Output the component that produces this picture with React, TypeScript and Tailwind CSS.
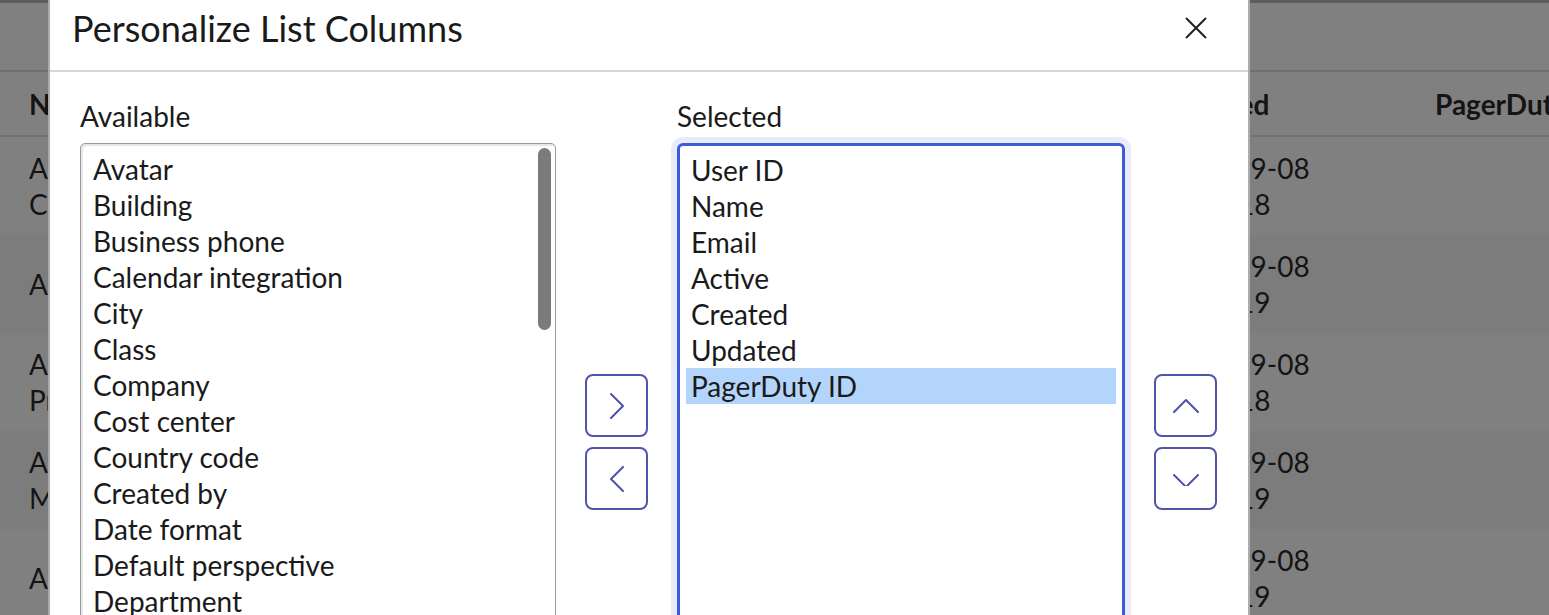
const available = [
  "Avatar",
  "Building",
  "Business phone",
  "Calendar integration",
  "City",
  "Class",
  "Company",
  "Cost center",
  "Country code",
  "Created by",
  "Date format",
  "Default perspective",
  "Department",
  "Domain",
  "Employee number",
  "Failed login attempts",
];

const selected = ["User ID", "Name", "Email", "Active", "Created", "Updated", "PagerDuty ID"];

const rows = [
  { name: ["Adam", "Cooper"], date: ["2022-09-08", "11:04:18"] },
  { name: ["Aaron"], date: ["2022-09-08", "11:04:19"] },
  { name: ["Alex", "Price"], date: ["2022-09-08", "11:04:18"] },
  { name: ["Amy", "Morris"], date: ["2022-09-08", "11:04:19"] },
  { name: ["Andrew"], date: ["2022-09-08", "11:04:19"] },
];

function Chevron({ dir }: { dir: "right" | "left" | "up" | "down" }) {
  const paths = {
    right: "M9 4 L21 16 L9 28",
    left: "M21 4 L9 16 L21 28",
    up: "M4 21 L16 9 L28 21",
    down: "M4 11 L16 23 L28 11",
  };
  const vertical = dir === "right" || dir === "left";
  return (
    <svg
      width={vertical ? 14 : 26}
      height={vertical ? 26 : 14}
      viewBox={vertical ? "8 3 14 26" : "3 8 26 14"}
      fill="none"
      stroke="#4f52ab"
      strokeWidth="2"
      strokeLinecap="round"
      strokeLinejoin="round"
    >
      <path d={paths[dir]} />
    </svg>
  );
}

function ArrowButton({ dir }: { dir: "right" | "left" | "up" | "down" }) {
  return (
    <button className="w-[63px] h-[63px] flex items-center justify-center border-2 border-[#5254ac] rounded-[8px] bg-white">
      <Chevron dir={dir} />
    </button>
  );
}

export default function App() {
  return (
    <div
      className="relative w-[1549px] h-[615px] overflow-hidden bg-[#808080] text-[#141414]"
      style={{ fontFamily: "Lato, 'Open Sans', sans-serif" }}
    >
      {/* page behind the overlay */}
      <div className="h-[3px] bg-[#5d5d5d]" />
      <div className="h-[69px] border-b-2 border-[#6f6f6f]" />
      <div className="h-[65px] border-b-2 border-[#727272] flex items-center text-[28px] font-bold whitespace-nowrap">
        <div className="pl-[29px] w-[1162px] shrink-0">Name</div>
        <div className="w-[273px] shrink-0">Updated</div>
        <div className="shrink-0">PagerDuty ID</div>
      </div>
      {rows.map((r, i) => (
        <div
          key={i}
          className={`h-[98px] flex items-center text-[28px] leading-[36px] ${i % 2 ? "bg-[#7c7c7c]" : "bg-[#808080]"}`}
        >
          <div className="pl-[29px] w-[1159px] shrink-0">
            {r.name.map((n) => (
              <div key={n}>{n}</div>
            ))}
          </div>
          <div>
            {r.date.map((d) => (
              <div key={d}>{d}</div>
            ))}
          </div>
        </div>
      ))}

      {/* modal */}
      <div className="absolute left-[48px] top-0 w-[1202px] h-[640px] bg-white border-x-2 border-[#acacac]">
        <div className="h-[72px] border-b-2 border-[#d6d6d6] flex items-center justify-between pl-[22px] pr-[40px]">
          <h2 className="text-[36px] leading-[40px] text-[#1a1a1a] -mt-[14px] whitespace-nowrap">Personalize List Columns</h2>
          <svg width="24" height="24" viewBox="0 0 24 24" className="-mt-[14px]" stroke="#222" strokeWidth="2">
            <path d="M2 2 L22 22 M22 2 L2 22" />
          </svg>
        </div>

        <div className="pl-[30px] pt-[30px] grid grid-cols-[476px_63px_448px_63px] gap-x-[29px] text-[28px] text-[#1a1a1a]">
          <div className="leading-[28px] mb-[13px]">Available</div>
          <div />
          <div className="leading-[28px] mb-[13px]">Selected</div>
          <div />

          <div className="h-[598px] flex border-[1.5px] border-[#9a9a9a] rounded-[5px] shadow-[inset_2px_2px_0_#e6e6e6] overflow-hidden">
            <ul className="flex-1 pt-[7px] px-[6px]">
              {available.map((a) => (
                <li key={a} className="h-[36px] leading-[36px] pl-[6px] whitespace-nowrap">
                  {a}
                </li>
              ))}
            </ul>
            <div className="w-[18px] pt-[4px] pr-[4px] pl-[1px]">
              <div className="h-[182px] w-[13px] rounded-full bg-[#7b7b7b]" />
            </div>
          </div>

          <div className="h-[598px] flex flex-col justify-center gap-[10px]">
            <ArrowButton dir="right" />
            <ArrowButton dir="left" />
          </div>

          <div className="h-[598px] border-[3px] border-[#3d5ad8] rounded-[6px] shadow-[0_0_0_6px_#e8ebfb] pt-[6px] px-[6px]">
            <ul>
              {selected.map((s) => (
                <li
                  key={s}
                  className={`h-[36px] leading-[36px] pl-[5px] ${s === "PagerDuty ID" ? "bg-[#b4d5fb]" : ""}`}
                >
                  {s}
                </li>
              ))}
            </ul>
          </div>

          <div className="h-[598px] flex flex-col justify-center gap-[10px]">
            <ArrowButton dir="up" />
            <ArrowButton dir="down" />
          </div>
        </div>
      </div>
    </div>
  );
}
